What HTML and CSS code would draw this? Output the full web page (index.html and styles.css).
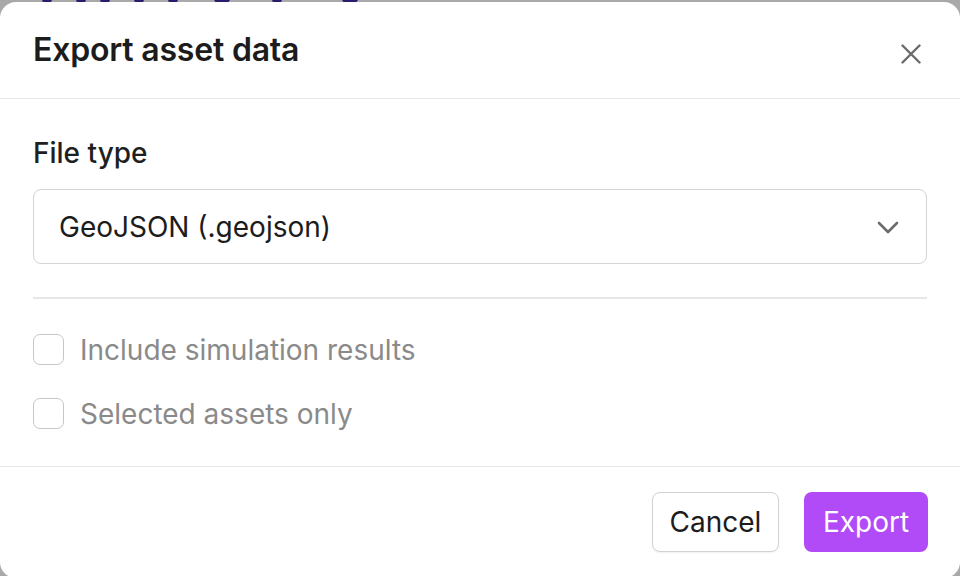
FILE: index.html
```html
<!DOCTYPE html>
<html lang="en">
<head>
<meta charset="utf-8">
<title>Export asset data</title>
<link rel="stylesheet" href="styles.css">
</head>
<body>
<div class="backdrop">
  <span class="blot b1"></span><span class="blot b2"></span><span class="blot b3"></span>
  <span class="blot b4"></span><span class="blot b5"></span><span class="blot b6"></span>
  <span class="blot b7"></span><span class="blot b8"></span>
</div>
<div class="modal">
  <header class="modal-header">
    <h1 class="title">Export asset data</h1>
    <button class="close" aria-label="Close">
      <svg width="20" height="20" viewBox="0 0 20 20"><path d="M1.5 1.5 L18.5 18.5 M18.5 1.5 L1.5 18.5" stroke="#6b6b6b" stroke-width="2.4" stroke-linecap="round"/></svg>
    </button>
  </header>
  <section class="modal-body">
    <div class="label">File type</div>
    <div class="select">
      <span class="select-value">GeoJSON (.geojson)</span>
      <svg class="chevron" width="22" height="14" viewBox="0 0 22 14"><path d="M2 2 L11 11 L20 2" fill="none" stroke="#6b6b6b" stroke-width="2.6" stroke-linecap="round" stroke-linejoin="round"/></svg>
    </div>
    <div class="divider"></div>
    <div class="options">
      <label class="option"><span class="box"></span><span class="option-text">Include simulation results</span></label>
      <label class="option"><span class="box"></span><span class="option-text">Selected assets only</span></label>
    </div>
  </section>
  <footer class="modal-footer">
    <button class="btn btn-cancel">Cancel</button>
    <button class="btn btn-export">Export</button>
  </footer>
</div>
</body>
</html>
```
FILE: styles.css
```css
* { box-sizing: border-box; }
html, body { margin: 0; padding: 0; }
body {
  width: 960px;
  height: 576px;
  overflow: hidden;
  background: #a9a9a9;
  font-family: Inter, "Noto Sans", "Liberation Sans", sans-serif;
  position: relative;
}
.backdrop {
  position: absolute;
  left: 0; top: 0;
  width: 960px; height: 10px;
}
.blot {
  position: absolute;
  top: -6px;
  width: 10px; height: 10px;
  border-radius: 50%;
  background: #2b1a6e;
}
.b1 { left: 42px; }
.b2 { left: 76px; }
.b3 { left: 100px; }
.b4 { left: 134px; }
.b5 { left: 168px; }
.b6 { left: 214px; width: 16px; }
.b7 { left: 272px; }
.b8 { left: 342px; width: 16px; }
.modal {
  position: relative;
  margin-top: 2px;
  width: 960px;
  height: 576px;
  background: #ffffff;
  border-radius: 16px;
  display: flex;
  flex-direction: column;
}
.modal-header {
  height: 97px;
  flex: none;
  display: flex;
  align-items: center;
  justify-content: space-between;
  padding: 0 33px;
  border-bottom: 1.5px solid #e6e6e6;
}
.title {
  margin: 0;
  font-size: 32px;
  line-height: 40px;
  font-weight: 600;
  color: #1c1c1c;
  letter-spacing: -0.2px;
}
.close {
  border: none;
  background: none;
  padding: 0;
  width: 20px;
  height: 20px;
  margin-right: 6px;
  margin-top: 7px;
  display: flex;
}
.modal-body {
  flex: none;
  height: 368px;
  padding: 36px 33px 0;
  border-bottom: 1.5px solid #e6e6e6;
  display: flex;
  flex-direction: column;
}
.label {
  font-size: 28px;
  line-height: 36px;
  font-weight: 500;
  color: #1f1f1f;
}
.select {
  margin-top: 18px;
  height: 75px;
  border: 1.5px solid #d4d4d4;
  border-radius: 8px;
  display: flex;
  align-items: center;
  justify-content: space-between;
  padding: 0 27px 0 25px;
}
.select-value {
  font-size: 28px;
  color: #1c1c1c;
}
.chevron { margin-top: 2px; }
.divider {
  margin-top: 33px;
  height: 1.5px;
  background: #e6e6e6;
}
.options {
  display: flex;
  flex-direction: column;
  gap: 34px;
  margin-top: 36px;
}
.option {
  display: flex;
  align-items: center;
  gap: 16px;
  height: 30px;
}
.box {
  width: 31px;
  height: 31px;
  border: 1.5px solid #c6c6c6;
  border-radius: 7px;
  flex: none;
}
.option-text {
  font-size: 28px;
  color: #8a8a8a;
}
.modal-footer {
  flex: 1;
  display: flex;
  justify-content: flex-end;
  align-items: flex-start;
  gap: 25px;
  padding: 25px 32px 0;
}
.btn {
  height: 60px;
  border-radius: 8px;
  font-family: inherit;
  font-size: 28px;
  padding: 0;
}
.btn-cancel {
  background: #ffffff;
  border: 1.5px solid #d2d2d2;
  color: #1c1c1c;
  width: 127px;
  box-shadow: 0 1px 2px rgba(0,0,0,0.06);
}
.btn-export {
  background: #b14af7;
  border: none;
  color: #ffffff;
  width: 124px;
}
```
